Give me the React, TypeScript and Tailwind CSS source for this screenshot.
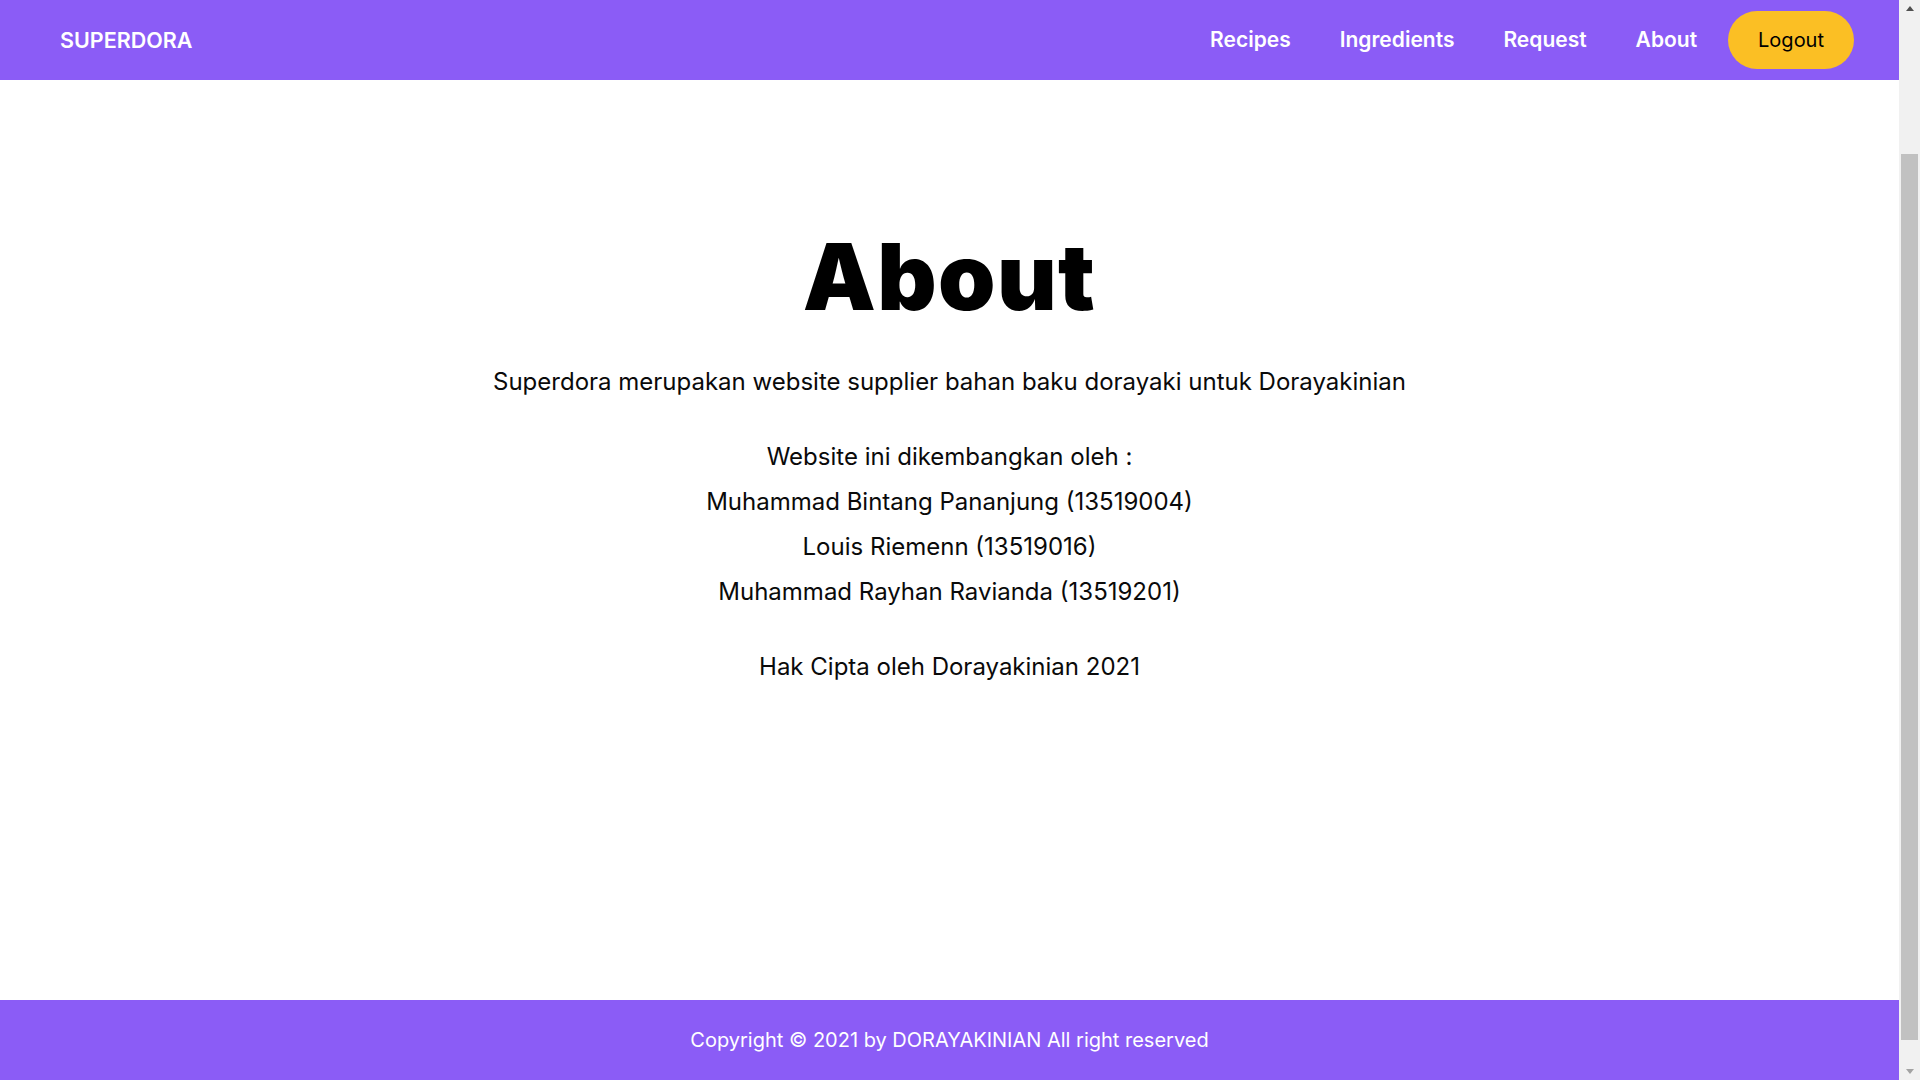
const font = { fontFamily: 'Inter, "Noto Sans", sans-serif' }

const navLinks = ['Recipes', 'Ingredients', 'Request', 'About']

const developers = [
  'Muhammad Bintang Pananjung (13519004)',
  'Louis Riemenn (13519016)',
  'Muhammad Rayhan Ravianda (13519201)',
]

function Navbar() {
  return (
    <nav className="h-[80px] shrink-0 bg-[#8b5cf6] flex items-center justify-between pl-[60px] pr-[45px]">
      <span className="text-white font-semibold text-[21.5px]">SUPERDORA</span>
      <div className="flex items-center">
        <ul className="flex items-center gap-[49px] mr-[31px]">
          {navLinks.map((link) => (
            <li key={link}>
              <a href="#" className="text-white font-semibold text-[21px]">
                {link}
              </a>
            </li>
          ))}
        </ul>
        <button className="h-[58px] px-[30px] rounded-full bg-[#fbbf24] text-black text-[20px] font-normal">
          Logout
        </button>
      </div>
    </nav>
  )
}

function Footer() {
  return (
    <footer className="h-[80px] shrink-0 bg-[#8b5cf6] flex items-center justify-center">
      <p className="text-white text-[20px]">Copyright © 2021 by DORAYAKINIAN All right reserved</p>
    </footer>
  )
}

function Scrollbar() {
  return (
    <div className="w-[21px] shrink-0 bg-[#f1f1f1] flex flex-col items-center">
      <div className="h-[17px] w-full flex items-center justify-center">
        <div className="w-0 h-0 border-l-[4px] border-r-[4px] border-b-[5px] border-l-transparent border-r-transparent border-b-[#505050]" />
      </div>
      <div className="h-[137px]" />
      <div className="w-[17px] h-[886px] bg-[#c1c1c1]" />
      <div className="flex-1" />
      <div className="h-[17px] w-full flex items-center justify-center">
        <div className="w-0 h-0 border-l-[4px] border-r-[4px] border-t-[5px] border-l-transparent border-r-transparent border-t-[#a3a3a3]" />
      </div>
    </div>
  )
}

export default function App() {
  return (
    <div className="h-screen w-full flex bg-white overflow-hidden" style={font}>
      <div className="flex-1 flex flex-col">
        <Navbar />
        <main className="flex-1 flex flex-col items-center pt-[151px] text-[#0a0a0a]">
          <h1 className="text-[92px] leading-none font-black tracking-[0.015em] text-black">About</h1>
          <p className="mt-[36px] text-[24px] leading-[45px]">
            Superdora merupakan website supplier bahan baku dorayaki untuk Dorayakinian
          </p>
          <div className="mt-[30px] flex flex-col items-center text-[24px] leading-[45px]">
            <p>Website ini dikembangkan oleh :</p>
            {developers.map((dev) => (
              <p key={dev}>{dev}</p>
            ))}
          </div>
          <p className="mt-[30px] text-[24px] leading-[45px]">Hak Cipta oleh Dorayakinian 2021</p>
        </main>
        <Footer />
      </div>
      <Scrollbar />
    </div>
  )
}
